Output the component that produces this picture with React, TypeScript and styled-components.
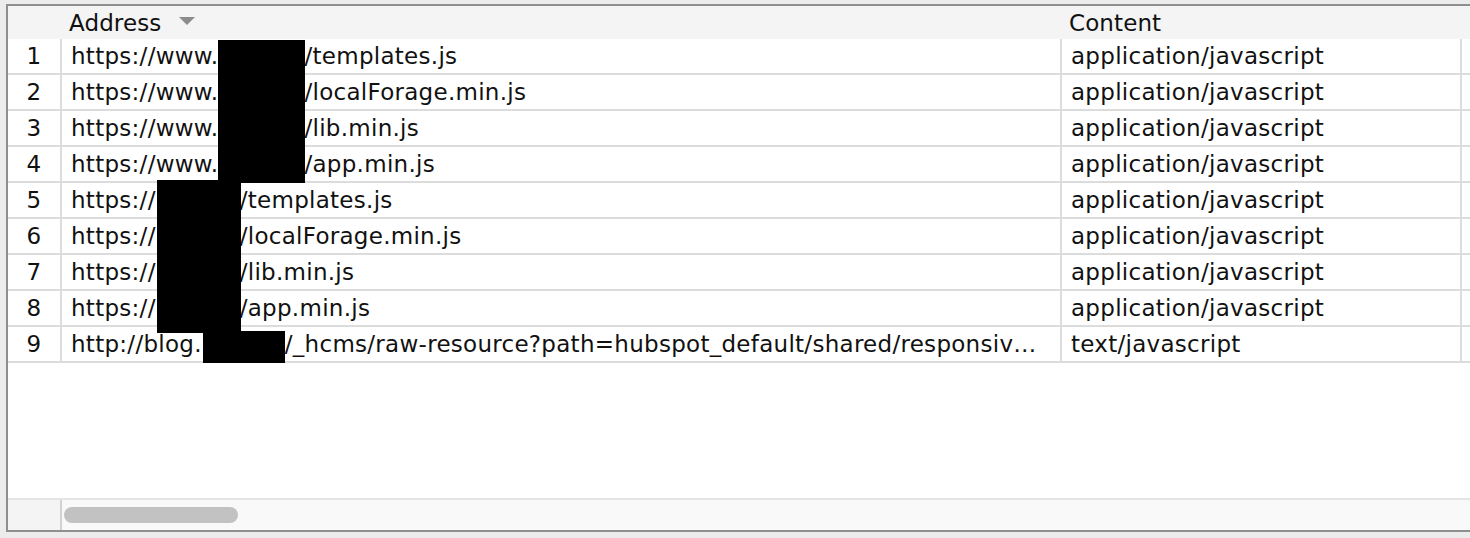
import React from "react";
import styled, { createGlobalStyle } from "styled-components";

const Global = createGlobalStyle`
  html, body { margin: 0; padding: 0; background: #ececec; }
  body { font-family: "DejaVu Sans", "Liberation Sans", sans-serif; overflow: hidden; }
`;

const Page = styled.div`
  width: 1470px;
  height: 538px;
  padding: 4px 0 0 6px;
  box-sizing: border-box;
  overflow: hidden;
`;

const Frame = styled.div`
  position: relative;
  width: 1480px;
  height: 528px;
  box-sizing: border-box;
  border-left: 2px solid #8f8f8f;
  border-top: 2px solid #8f8f8f;
  border-bottom: 2px solid #8f8f8f;
  background: #ffffff;
  display: flex;
  flex-direction: column;
`;

const cols = "54px 1000px 400px 200px";

const HeaderRow = styled.div`
  display: grid;
  grid-template-columns: ${cols};
  height: 33px;
  background: #f4f4f4;
  flex: none;
`;

const HeadCell = styled.div<{ $first?: boolean }>`
  position: relative;
  display: flex;
  align-items: center;
  gap: 18px;
  padding-left: ${(p) => (p.$first ? 0 : 7)}px;
  font-size: 23px;
  letter-spacing: 0.1px;
  color: #111;
  white-space: nowrap;
  overflow: hidden;
  border-right: 2px solid transparent;
  &::after {
    content: "";
    position: absolute;
    right: -2px;
    top: 6px;
    bottom: 5px;
    width: 2px;
    background: #d6d6d6;
  }
`;

const SortArrow = styled.span`
  width: 0;
  height: 0;
  border-left: 8px solid transparent;
  border-right: 8px solid transparent;
  border-top: 8px solid #8c8c8c;
  margin-top: -4px;
`;

const Body = styled.div`
  flex: 1;
  display: flex;
  flex-direction: column;
  background: #fff;
`;

const Row = styled.div`
  display: grid;
  grid-template-columns: ${cols};
  height: 36px;
  box-sizing: border-box;
  border-bottom: 2px solid #dcdcdc;
`;

const Cell = styled.div<{ $num?: boolean }>`
  display: flex;
  align-items: center;
  justify-content: ${(p) => (p.$num ? "center" : "flex-start")};
  padding-left: ${(p) => (p.$num ? 0 : 9)}px;
  padding-right: ${(p) => (p.$num ? 0 : 14)}px;
  box-sizing: border-box;
  border-right: 2px solid #dcdcdc;
  font-size: 23px;
  letter-spacing: 0.28px;
  color: #111;
  white-space: nowrap;
  overflow: hidden;
  min-width: 0;
`;

const Text = styled.span`
  overflow: hidden;
  text-overflow: ellipsis;
  white-space: nowrap;
  min-width: 0;
`;

const Gap = styled.span<{ $w: number }>`
  display: inline-block;
  width: ${(p) => p.$w}px;
`;

const ScrollArea = styled.div`
  flex: none;
  height: 30px;
  display: grid;
  grid-template-columns: 54px 1fr;
  border-top: 2px solid #e4e4e4;
`;

const ScrollCorner = styled.div`
  background: #f4f4f4;
  border-right: 2px solid #d2d2d2;
`;

const Track = styled.div`
  background: #f9f9f9;
  display: flex;
  align-items: center;
  padding-left: 2px;
`;

const Thumb = styled.div`
  width: 174px;
  height: 16px;
  border-radius: 8px;
  background: #c2c2c2;
`;

const Redact = styled.div`
  position: absolute;
  background: #000;
`;

type R = { n: number; pre: string; gap: number; post: string; type: string };

const rows: R[] = [
  { n: 1, pre: "https://www.", gap: 86, post: "/templates.js", type: "application/javascript" },
  { n: 2, pre: "https://www.", gap: 86, post: "/localForage.min.js", type: "application/javascript" },
  { n: 3, pre: "https://www.", gap: 86, post: "/lib.min.js", type: "application/javascript" },
  { n: 4, pre: "https://www.", gap: 86, post: "/app.min.js", type: "application/javascript" },
  { n: 5, pre: "https://", gap: 84, post: "/templates.js", type: "application/javascript" },
  { n: 6, pre: "https://", gap: 84, post: "/localForage.min.js", type: "application/javascript" },
  { n: 7, pre: "https://", gap: 84, post: "/lib.min.js", type: "application/javascript" },
  { n: 8, pre: "https://", gap: 84, post: "/app.min.js", type: "application/javascript" },
  {
    n: 9,
    pre: "http://blog.",
    gap: 83,
    post: "/_hcms/raw-resource?path=hubspot_default/shared/responsive/js/layout.min.js",
    type: "text/javascript",
  },
];

export default function App() {
  return (
    <Page>
      <Global />
      <Frame>
        <HeaderRow>
          <HeadCell $first />
          <HeadCell>
            Address
            <SortArrow />
          </HeadCell>
          <HeadCell>Content</HeadCell>
          <HeadCell>Size</HeadCell>
        </HeaderRow>
        <Body>
          {rows.map((r) => (
            <Row key={r.n}>
              <Cell $num>{r.n}</Cell>
              <Cell>
                <Text>
                  {r.pre}
                  <Gap $w={r.gap} />
                  {r.post}
                </Text>
              </Cell>
              <Cell>{r.type}</Cell>
              <Cell />
            </Row>
          ))}
        </Body>
        <ScrollArea>
          <ScrollCorner />
          <Track>
            <Thumb />
          </Track>
        </ScrollArea>
        <Redact style={{ left: 210, top: 34, width: 87, height: 143 }} />
        <Redact style={{ left: 149, top: 174, width: 84, height: 153 }} />
        <Redact style={{ left: 195, top: 325, width: 82, height: 32 }} />
      </Frame>
    </Page>
  );
}
